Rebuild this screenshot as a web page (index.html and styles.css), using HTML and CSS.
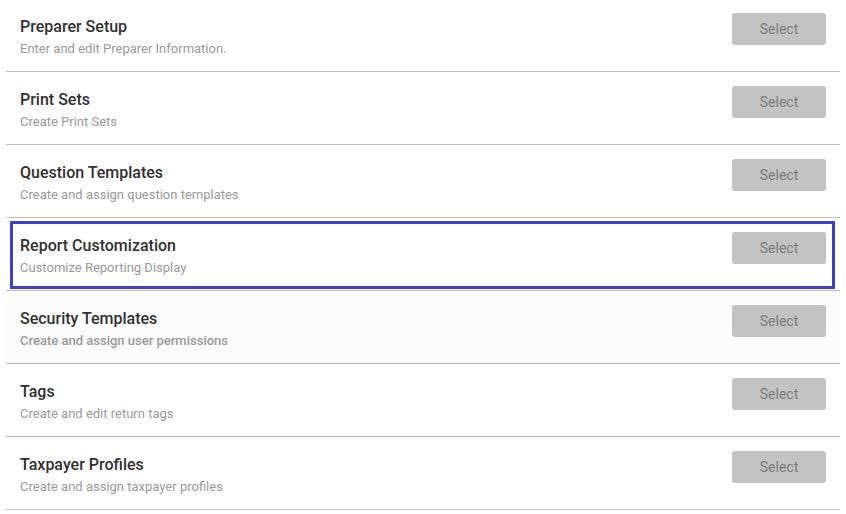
FILE: index.html
```html
<!DOCTYPE html>
<html>
<head>
<meta charset="utf-8">
<link rel="stylesheet" href="styles.css">
</head>
<body>
<div class="list">
  <div class="row">
    <div class="info"><div class="title">Preparer Setup</div><div class="desc">Enter and edit Preparer Information.</div></div>
    <button class="btn">Select</button>
  </div>
  <div class="row">
    <div class="info"><div class="title">Print Sets</div><div class="desc">Create Print Sets</div></div>
    <button class="btn">Select</button>
  </div>
  <div class="row">
    <div class="info"><div class="title">Question Templates</div><div class="desc">Create and assign question templates</div></div>
    <button class="btn">Select</button>
  </div>
  <div class="row focused">
    <div class="info"><div class="title">Report Customization</div><div class="desc">Customize Reporting Display</div></div>
    <button class="btn">Select</button>
  </div>
  <div class="row hovered">
    <div class="info"><div class="title">Security Templates</div><div class="desc">Create and assign user permissions</div></div>
    <button class="btn">Select</button>
  </div>
  <div class="row">
    <div class="info"><div class="title">Tags</div><div class="desc">Create and edit return tags</div></div>
    <button class="btn">Select</button>
  </div>
  <div class="row">
    <div class="info"><div class="title">Taxpayer Profiles</div><div class="desc">Create and assign taxpayer profiles</div></div>
    <button class="btn">Select</button>
  </div>
</div>
</body>
</html>
```
FILE: styles.css
```css
html, body {
  margin: 0;
  padding: 0;
  background: #ffffff;
  font-family: Roboto, "Liberation Sans", sans-serif;
}
.list {
  margin: -1px 6px 0 6px;
  width: 834px;
}
.row {
  position: relative;
  height: 72px;
  border-bottom: 1px solid #bdbdbd;
  display: flex;
  align-items: flex-start;
  justify-content: space-between;
  box-sizing: content-box;
}
.row.hovered {
  background: #fcfcfc;
}
.row.focused::after {
  content: "";
  position: absolute;
  top: 3px;
  left: 4px;
  right: 5px;
  bottom: 1px;
  border: 3px solid #3a42cc;
  pointer-events: none;
}
.info {
  padding: 18px 0 0 14px;
}
.title {
  font-size: 16px;
  line-height: 20px;
  font-weight: 500;
  color: #303030;
}
.desc {
  margin-top: 3px;
  font-size: 13px;
  line-height: 18px;
  color: #999999;
}
.row.hovered .desc {
  font-weight: 500;
}
.btn {
  margin: 14px 14px 0 0;
  width: 94px;
  height: 32px;
  border: none;
  border-radius: 3px;
  background: #c2c2c2;
  color: #7b7b7b;
  font-family: Roboto, "Liberation Sans", sans-serif;
  font-size: 14px;
  padding: 0;
}
```
